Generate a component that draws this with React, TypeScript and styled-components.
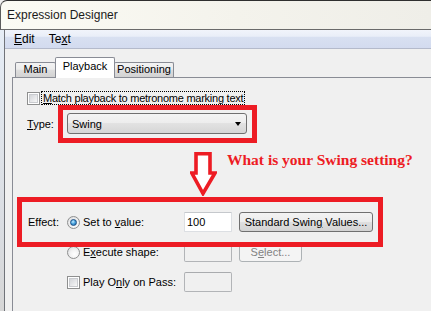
import React from "react";
import styled, { createGlobalStyle } from "styled-components";

const GlobalStyle = createGlobalStyle`
  html, body {
    margin: 0;
    padding: 0;
    background: #f0f0f0;
    overflow: hidden;
  }
  body {
    font-family: "Liberation Sans", Arial, sans-serif;
    font-size: 11px;
    color: #000;
  }
  u {
    text-decoration: underline;
    text-underline-offset: 1px;
  }
`;

const Window = styled.div`
  width: 431px;
  height: 311px;
  display: flex;
  flex-direction: column;
  overflow: hidden;
  background: #f0f0f0;
`;

const TitleBar = styled.div`
  height: 28px;
  flex-shrink: 0;
  border-top: 1px solid #2f2f2f;
  border-left: 1px solid #5c5c5c;
  border-bottom: 1px solid #6a6a6a;
  border-top-left-radius: 7px;
  background: linear-gradient(to right, #fbfbf4, #f4f3ec 55%, #efeee8);
  padding-left: 6px;
  font-size: 12px;
  line-height: 28px;
  color: #1a1a1a;
`;

const Body = styled.div`
  flex: 1;
  display: flex;
  min-height: 0;
`;

const LeftFrame = styled.div`
  width: 4px;
  flex-shrink: 0;
  border-right: 1px solid #707379;
  background: linear-gradient(#e6edf6, #dadde2 70%, #d6d6d6);
`;

const Client = styled.div`
  flex: 1;
  display: flex;
  flex-direction: column;
  min-width: 0;
`;

const MenuBar = styled.div`
  height: 18px;
  flex-shrink: 0;
  display: flex;
  padding-left: 2px;
  border-bottom: 1px solid #b4bacb;
  background: linear-gradient(#f1f4fb 0%, #e9eef8 35%, #d8e0f1 40%, #d3dbef 100%);
`;

const MenuItem = styled.div`
  padding: 0 7px;
  font-size: 12px;
  line-height: 18px;
  color: #000;
`;

const TabStrip = styled.div`
  display: flex;
  align-items: flex-end;
  padding: 8px 0 0 11px;
  flex-shrink: 0;
`;

const Tab = styled.div<{ $active?: boolean; $width: number }>`
  box-sizing: border-box;
  width: ${(p) => p.$width}px;
  height: ${(p) => (p.$active ? 21 : 15)}px;
  margin-left: -1px;
  margin-bottom: ${(p) => (p.$active ? -1 : 0)}px;
  border: 1px solid #898c95;
  border-bottom: none;
  border-radius: 2px 2px 0 0;
  background: ${(p) =>
    p.$active
      ? "#ffffff"
      : "linear-gradient(#f3f3f3, #ececec 45%, #dedede 50%, #d2d2d2)"};
  text-align: center;
  font-size: 11px;
  line-height: ${(p) => (p.$active ? 16 : 12)}px;
  position: relative;
  z-index: ${(p) => (p.$active ? 2 : 1)};
`;

const Panel = styled.div`
  flex: 1;
  margin-left: 7px;
  border-top: 1px solid #898c95;
  border-left: 1px solid #898c95;
  background: #f0f0f0;
  padding: 13px 0 0 14px;
  display: flex;
  flex-direction: column;
`;

const CheckRow = styled.div`
  display: flex;
  align-items: center;
  height: 14px;
`;

const CheckBox = styled.span`
  box-sizing: border-box;
  width: 13px;
  height: 13px;
  flex-shrink: 0;
  border: 1px solid #8e8f8f;
  background: #fff;
  padding: 1px;
  &::after {
    content: "";
    display: block;
    box-sizing: border-box;
    width: 9px;
    height: 9px;
    border: 1px solid #c9cbcf;
    background: linear-gradient(135deg, #d3d5d9, #f7f7f7);
  }
`;

const FocusLabel = styled.span`
  margin-left: 1px;
  padding: 0 1px;
  border: 1px dotted #000;
  line-height: 12px;
  letter-spacing: -0.25px;
  white-space: nowrap;
`;

const TypeRow = styled.div`
  display: flex;
  align-items: center;
`;

const FieldLabel = styled.span<{ $width: number }>`
  width: ${(p) => p.$width}px;
  flex-shrink: 0;
  white-space: nowrap;
`;

const Highlight = styled.div`
  box-sizing: border-box;
  border: 5px solid #ed1c24;
`;

const ComboFrame = styled(Highlight)`
  width: 199px;
  height: 38px;
  padding: 3px 5px 4px 4px;
`;

const Combo = styled.div`
  box-sizing: border-box;
  width: 180px;
  height: 21px;
  border: 1px solid #707070;
  border-radius: 3px;
  background: linear-gradient(#f4f4f4, #ededed 49%, #e2e2e2 50%, #d6d6d6);
  display: flex;
  align-items: center;
  justify-content: space-between;
  padding: 0 5px 0 4px;
  &::after {
    content: "";
    width: 0;
    height: 0;
    border-left: 3.5px solid transparent;
    border-right: 3.5px solid transparent;
    border-top: 4px solid #000;
  }
`;

const Annotation = styled.div`
  display: flex;
  align-items: flex-start;
  height: 45px;
  margin-top: 9px;
  padding-left: 163px;
`;

const Note = styled.span`
  margin-left: 10px;
  font-family: "Liberation Serif", "Times New Roman", serif;
  font-weight: bold;
  font-size: 15.5px;
  line-height: 15px;
  color: #ed1c24;
  white-space: nowrap;
`;

const EffectFrame = styled(Highlight)`
  width: 366px;
  height: 50px;
  margin-left: -10px;
  margin-bottom: -5px;
  padding-left: 6px;
  display: flex;
  align-items: center;
  position: relative;
  z-index: 1;
`;

const OptionRow = styled.div<{ $gap?: number }>`
  display: flex;
  align-items: center;
  height: 20px;
  margin-top: ${(p) => p.$gap ?? 0}px;
`;

const Radio = styled.span<{ $checked?: boolean }>`
  box-sizing: border-box;
  width: 13px;
  height: 13px;
  flex-shrink: 0;
  border-radius: 50%;
  border: 1px solid #8e8f8f;
  background: radial-gradient(circle at 60% 65%, #ffffff 0%, #f2f2f2 45%, #d2d4d8 100%);
  display: flex;
  align-items: center;
  justify-content: center;
  &::after {
    content: "";
    display: ${(p) => (p.$checked ? "block" : "none")};
    box-sizing: border-box;
    width: 7px;
    height: 7px;
    border-radius: 50%;
    border: 1px solid #1b4f85;
    background: radial-gradient(circle at 40% 35%, #c8ecff 0%, #4ba6e0 45%, #1d5f9f 100%);
  }
`;

const OptionText = styled.span`
  width: 101px;
  margin-left: 3px;
  flex-shrink: 0;
  white-space: nowrap;
`;

const OptionBox = styled(CheckBox)``;

const TextBox = styled.div<{ $disabled?: boolean }>`
  box-sizing: border-box;
  width: 48px;
  height: 20px;
  flex-shrink: 0;
  padding-left: 2px;
  line-height: 18px;
  border: 1px solid ${(p) => (p.$disabled ? "#b2b4b7" : "#dcdfe3")};
  border-top-color: ${(p) => (p.$disabled ? "#a9abae" : "#c5c8cc")};
  border-radius: ${(p) => (p.$disabled ? 2 : 1)}px;
  background: ${(p) => (p.$disabled ? "#f0f0f0" : "#ffffff")};
`;

const PushButton = styled.div<{ $width: number; $disabled?: boolean }>`
  box-sizing: border-box;
  width: ${(p) => p.$width}px;
  height: 20px;
  margin-left: 7px;
  flex-shrink: 0;
  border: 1px solid ${(p) => (p.$disabled ? "#adb2b5" : "#707070")};
  border-radius: 3px;
  background: ${(p) =>
    p.$disabled
      ? "#f4f4f4"
      : "linear-gradient(#f3f3f3, #ececec 49%, #dfdfdf 50%, #d3d3d3)"};
  color: ${(p) => (p.$disabled ? "#838383" : "#000")};
  text-align: center;
  line-height: 18px;
  white-space: nowrap;
`;

const DownArrow = () => (
  <svg width="27" height="44" viewBox="0 0 27 44">
    <path
      d="M6 1.8 H20 V21 H25 L13 41.5 L1.8 21 H6 Z"
      fill="#ffffff"
      stroke="#ed1c24"
      strokeWidth="3.6"
      strokeLinejoin="miter"
    />
  </svg>
);

const tabs = [
  { name: "Main", width: 41 },
  { name: "Playback", width: 60, active: true },
  { name: "Positioning", width: 60 },
];

const App = () => {
  return (
    <Window>
      <GlobalStyle />
      <TitleBar>Expression Designer</TitleBar>
      <Body>
        <LeftFrame />
        <Client>
          <MenuBar>
            <MenuItem>
              <u>E</u>dit
            </MenuItem>
            <MenuItem>
              Te<u>x</u>t
            </MenuItem>
          </MenuBar>
          <TabStrip>
            {tabs.map((t) => (
              <Tab key={t.name} $active={t.active} $width={t.width}>
                {t.name}
              </Tab>
            ))}
          </TabStrip>
          <Panel>
            <CheckRow>
              <CheckBox />
              <FocusLabel>
                <u>M</u>atch playback to metronome marking text
              </FocusLabel>
            </CheckRow>
            <TypeRow>
              <FieldLabel $width={31}>
                <u>T</u>ype:
              </FieldLabel>
              <ComboFrame>
                <Combo>Swing</Combo>
              </ComboFrame>
            </TypeRow>
            <Annotation>
              <DownArrow />
              <Note>What is your Swing setting?</Note>
            </Annotation>
            <EffectFrame>
              <FieldLabel $width={39}>Effect:</FieldLabel>
              <Radio $checked />
              <OptionText>
                Set to <u>v</u>alue:
              </OptionText>
              <TextBox>100</TextBox>
              <PushButton $width={134}>
                Standard Swin<u>g</u> Values...
              </PushButton>
            </EffectFrame>
            <OptionRow>
              <FieldLabel $width={40} />
              <Radio />
              <OptionText>
                E<u>x</u>ecute shape:
              </OptionText>
              <TextBox $disabled />
              <PushButton $width={63} $disabled>
                S<u>e</u>lect...
              </PushButton>
            </OptionRow>
            <OptionRow $gap={10}>
              <FieldLabel $width={40} />
              <OptionBox />
              <OptionText>
                Play O<u>n</u>ly on Pass:
              </OptionText>
              <TextBox $disabled />
            </OptionRow>
          </Panel>
        </Client>
      </Body>
    </Window>
  );
};

export default App;
